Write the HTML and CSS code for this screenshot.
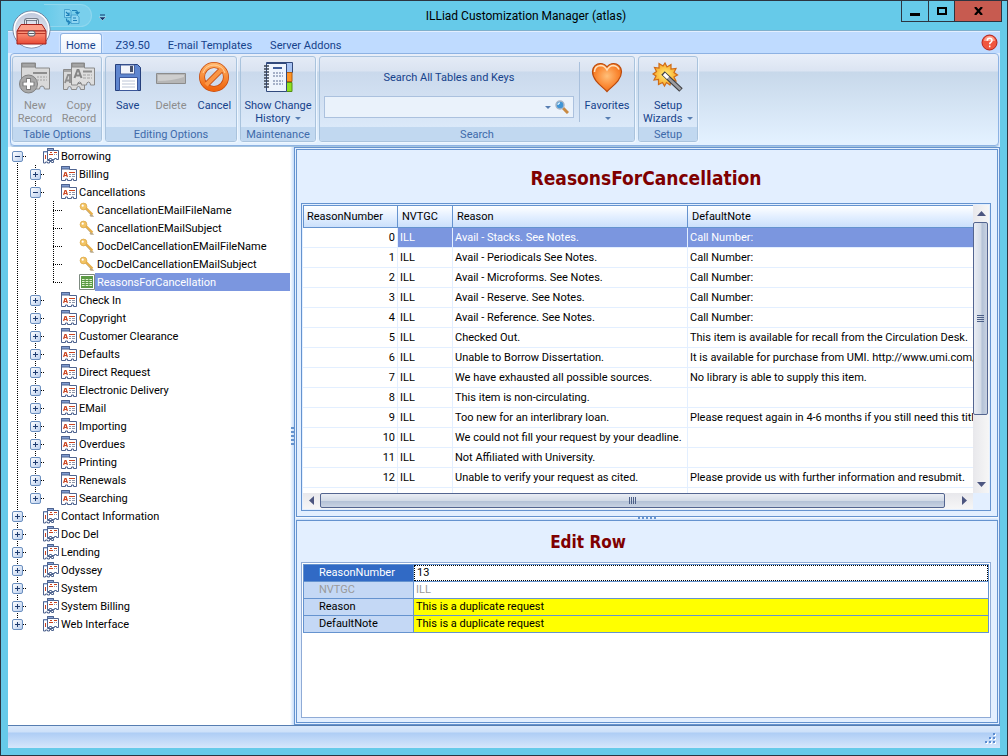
FILE: index.html
```
<!DOCTYPE html>
<html lang="en">
<head>
<meta charset="utf-8">
<title>ILLiad Customization Manager (atlas)</title>
<link rel="stylesheet" href="styles.css">
</head>
<body>
<svg class="defs" aria-hidden="true">
  <defs>
    <linearGradient id="orange" x1="0" y1="0" x2="0" y2="1"><stop offset="0" stop-color="#ffb163"/><stop offset="1" stop-color="#f0660f"/></linearGradient>
    <radialGradient id="orb" cx=".5" cy=".75" r=".75"><stop offset="0" stop-color="#ffffff"/><stop offset=".5" stop-color="#e3e7f1"/><stop offset="1" stop-color="#b9c3d8"/></radialGradient>
    <linearGradient id="red" x1="0" y1="0" x2="0" y2="1"><stop offset="0" stop-color="#ff9a80"/><stop offset="1" stop-color="#e84a35"/></linearGradient>
    <radialGradient id="gold" cx=".5" cy=".5" r=".5"><stop offset="0" stop-color="#fff27a"/><stop offset="1" stop-color="#f9a526"/></radialGradient>
    <radialGradient id="heart" cx=".5" cy=".45" r=".6"><stop offset="0" stop-color="#ffc07a"/><stop offset=".6" stop-color="#fb8a35"/><stop offset="1" stop-color="#ee6a12"/></radialGradient>
    <symbol id="i-card" viewBox="0 0 16 16">
      <path d="M.5.500h8v3h7v11h-3v-1.500h-2v1.500h-4v-1.500h-2v1.500h-4z" fill="#fff" stroke="#4d628e"/>
      <path d="M.5.500h8v2.500h-8z" fill="#7f9bd0" stroke="#4d628e"/>
      <path d="M2.600 11l1.400-4.500h1l1.400 4.500M3.200 9.500h2.600" fill="none" stroke="#cb4420" stroke-width="1.200"/>
      <path d="M8 6.500h6" stroke="#cb4420"/><path d="M8 8.500h2M11 8.500h3M8 10.500h2M11 10.500h3" stroke="#8d96ab"/>
    </symbol>
    <symbol id="i-cards" viewBox="0 0 16 16">
      <path d="M.5 3.500h4v9h6v2h-2v-1h-2v1.500h-2v-1h-2v1h-2z" fill="#fff" stroke="#4d628e"/>
      <path d="M1 4h3" stroke="#7f9bd0"/><path d="M2.500 7v4" stroke="#cb4420"/>
      <path d="M4.500.5h6v2h5v9h-2v-1h-2v1h-3v-1h-2v1h-2z" fill="#fff" stroke="#4d628e"/>
      <path d="M4.500.5h6v2h-6z" fill="#8aa5d8" stroke="#4d628e"/>
      <path d="M7 4.500h2M6 6.500h4" stroke="#cb4420" fill="none"/>
      <path d="M11 4.500h3" stroke="#cb4420"/><path d="M11 6.500h1M13 6.500h1" stroke="#8d96ab"/>
    </symbol>
    <symbol id="i-key" viewBox="0 0 16 16">
      <path d="M6 6l7.500 8h-1.500l-1-1" stroke="#b9a98a" stroke-width="1.500" fill="none"/>
      <path d="M6 5l7.500 7.500" stroke="#e8b04a" stroke-width="2.200"/>
      <circle cx="4.500" cy="4.500" r="3.400" fill="#f3c463" stroke="#d9a548" stroke-width=".7"/>
      <circle cx="3.700" cy="3.700" r="1.100" fill="#fff"/>
    </symbol>
    <symbol id="i-table" viewBox="0 0 16 16">
      <path d="M.5.5h15v15h-15z" fill="#fff" stroke="#7d8a80"/>
      <path d="M2 2h12v12h-12z" fill="#5c9a45"/>
      <path d="M3 5.500h2.600M6.700 5.500h2.600M10.400 5.500h2.600M3 7.500h2.600M6.700 7.500h2.600M10.400 7.500h2.600M3 9.500h2.600M6.700 9.500h2.600M10.400 9.500h2.600M3 11.500h2.600M6.700 11.500h2.600M10.400 11.500h2.600" stroke="#dff3cf"/>
    </symbol>
  </defs>
</svg>

<div class="window">
  <header class="titlebar">
    <div class="quick">
      <button class="quick-btn" aria-label="Refresh">
        <svg width="18" height="16" viewBox="0 0 18 16"><path d="M1.500.5h5l1.500 2v6h-6.500zM8 6h6l2 2v6.500h-8z" fill="#8fd6f2" stroke="#3b9bca" stroke-width=".8"/><path d="M3 3l3 3M6 3.500v3h-3M9 1.500h4q1.500 0 1.500 3M12.500 3l2 2 2-2M3.500 9.500q0 4 3.500 4M5 11.500l2 2-2 2M10 9h3M10 11.500h4" fill="none" stroke="#1c7fb8" stroke-width="1.200"/></svg>
      </button>
    </div>
    <button class="quick-more" aria-label="Customize toolbar">
      <svg width="7" height="7"><path d="M1 1h5" stroke="#15386e"/><path d="M0 3h7l-3.500 3.500z" fill="#15386e" stroke="#fff" stroke-width=".4"/></svg>
    </button>
    <h1 class="title">ILLiad Customization Manager (atlas)</h1>
    <div class="win-controls">
      <button class="win-btn min" aria-label="Minimize"><svg width="10" height="9"><path d="M0 6h10v3h-10z"/></svg></button>
      <button class="win-btn max" aria-label="Maximize"><svg width="10" height="8"><path d="M1 1h8v6h-8z" fill="none" stroke="#000" stroke-width="2"/></svg></button>
      <button class="win-btn close" aria-label="Close"><svg width="9" height="8"><path d="M1 0l7 8M8 0l-7 8" stroke="#000" stroke-width="2.200"/></svg></button>
    </div>
    <button class="orb" aria-label="Application menu">
      <svg width="39" height="39" viewBox="0 0 39 39">
        <circle cx="19.500" cy="19.500" r="18.500" fill="url(#orb)" stroke="#6f7f9c"/>
        <circle cx="19.500" cy="19.500" r="17.300" fill="none" stroke="#fff" stroke-width="1.400"/>
        <path d="M13.500 16v-5.500q0-1 1-1h10q1 0 1 1v5.500" fill="none" stroke="#59616e" stroke-width="2.600"/>
        <path d="M13.500 16v-5.500q0-1 1-1h10q1 0 1 1v5.500" fill="none" stroke="#e8ebf0" stroke-width="1"/>
        <path d="M9 14.500h21l4 6.500h-29z" fill="#fca08a" stroke="#a01f1a"/>
        <path d="M5 21h29v13h-29z" fill="url(#red)" stroke="#a01f1a"/>
        <path d="M5.500 23.500h28" stroke="#b93527"/>
        <rect x="16" y="21" width="7" height="5" rx="2" fill="#f4f4f4" stroke="#575c66"/><path d="M16.500 23.500h6" stroke="#575c66"/>
      </svg>
    </button>
  </header>

  <div class="client">
    <nav class="tabs">
      <button class="tab active">Home</button>
      <button class="tab">Z39.50</button>
      <button class="tab">E-mail Templates</button>
      <button class="tab">Server Addons</button>
      <button class="help" aria-label="Help"><svg width="17" height="17"><circle cx="8.500" cy="8.500" r="7.500" fill="#f0563f" stroke="#b3221b"/><path d="M3 7a5.500 5 0 0 1 11 0z" fill="#ff9f8c"/><path d="M6.200 6.800q0-2.500 2.400-2.500t2.400 2.200q0 1.300-1.400 2-.9.500-.9 1.700M8.700 11.500v1.700" fill="none" stroke="#fff" stroke-width="1.500"/></svg></button>
    </nav>

    <div class="ribbon">
      <section class="group g-table">
        <div class="group-body">
          <button class="tool" disabled>
            <svg width="32" height="32" viewBox="0 0 32 32"><path d="M2.500 6v-5h14v5h14v21h-5q0-3-2.500-3t-2.500 3h-8v-3h-2v3h-8z" fill="#d9d9d9" stroke="#8a8a8a"/><path d="M3 1.500h13v3.500h-13z" fill="#a5a5a5" stroke="#8a8a8a"/><path d="M14 11h14" stroke="#8e8e8e" stroke-width="2"/><path d="M18 15h10M18 18h10" stroke="#a2a2a2" stroke-dasharray="2 1"/><circle cx="9.500" cy="22" r="9" fill="#a8a8a8" stroke="#808080"/><path d="M9.500 16v12M3.500 22h12" stroke="#777" stroke-width="4.600"/><path d="M9.500 17v10M4.500 22h10" stroke="#fff" stroke-width="3"/></svg>
            <span>New<br>Record</span>
          </button>
          <button class="tool" disabled>
            <svg width="32" height="32" viewBox="0 0 32 32"><path d="M.5 7.500h10v14h11v6h-4q0-3-2-3t-2 3h-5q0-3-2-3t-2 3h-4z" fill="#d9d9d9" stroke="#8a8a8a"/><path d="M1 8h8v2h-8z" fill="#a5a5a5"/><path d="M2 21l3-8h2v8M3 18.500h4" fill="none" stroke="#8e8e8e" stroke-width="1.800"/><path d="M8.500 6v-5h13v5h10v17h-4q0-3-2-3t-2 3h-5q0-3-2-3t-2 3h-6z" fill="#dedede" stroke="#8a8a8a"/><path d="M9 1.500h12v3.500h-12z" fill="#a5a5a5" stroke="#8a8a8a"/><path d="M11.500 16l3-8h1l3 8M12.500 13.500h5" fill="none" stroke="#858585" stroke-width="2"/><path d="M20 9.500h9" stroke="#8e8e8e" stroke-width="2"/><path d="M20 13h9M20 16h9" stroke="#a2a2a2" stroke-dasharray="3 1"/></svg>
            <span>Copy<br>Record</span>
          </button>
        </div>
        <h2>Table Options</h2>
      </section>
      <section class="group g-edit">
        <div class="group-body">
          <button class="tool">
            <svg width="32" height="32" viewBox="0 0 32 32"><path d="M3.500 2.500h22l3 3v23h-25z" fill="#5f86cf" stroke="#253f7c"/><path d="M8.500 3h14v9h-14z" fill="#f2f4fa" stroke="#46609c"/><path d="M18 4h3v6h-3z" fill="#46506a"/><path d="M7.500 15.500h18v13h-18z" fill="#fff" stroke="#3b5699"/><path d="M10 19h13M10 22h13M10 25h13" stroke="#bcc5d6"/></svg>
            <span>Save</span>
          </button>
          <button class="tool" disabled>
            <svg width="32" height="32" viewBox="0 0 32 32"><path d="M1.500 11.500h29v10h-29z" fill="#b6b6b6" stroke="#8c8c8c"/><path d="M3 13h26v2q-12 4-26 4z" fill="#cecece"/></svg>
            <span>Delete</span>
          </button>
          <button class="tool">
            <svg width="32" height="32" viewBox="0 0 32 32"><circle cx="16" cy="15" r="12" fill="none" stroke="#c74d10" stroke-width="6"/><path d="M8 23l16-16" stroke="#c74d10" stroke-width="6"/><circle cx="16" cy="15" r="12" fill="none" stroke="url(#orange)" stroke-width="4.400"/><path d="M8 23l16-16" stroke="#fa9545" stroke-width="4"/><path d="M5 11q3-8 11-8t11 8" fill="none" stroke="#ffd0a0" stroke-width="1"/></svg>
            <span>Cancel</span>
          </button>
        </div>
        <h2>Editing Options</h2>
      </section>
      <section class="group g-history">
        <div class="group-body">
          <button class="tool">
            <svg width="32" height="32" viewBox="0 0 32 32"><path d="M4.500.5h26v10h-26z" fill="#a8c3f2" stroke="#31497c"/><path d="M24.500 10.500h5.500v9h-5.500z" fill="#ff9324" stroke="#b35d0c"/><path d="M24.500 20.500h5.500v9h-5.500z" fill="#8fe01e" stroke="#548f14"/><path d="M4.500 1.500h20v28h-20z" fill="#eef4fd" stroke="#31497c"/><path d="M11 6h9" stroke="#3c5a99" stroke-width="2"/><path d="M11 11h10M11 14h10M11 19h10M11 22h10" stroke="#5f6f94" stroke-dasharray="2 1"/><path d="M2 4h5M2 7h5M2 10h5M2 13h5M2 16h5M2 19h5M2 22h5M2 25h5" stroke="#3b4351" stroke-width="1.500"/></svg>
            <span>Show Change<br>History <i class="caret"></i></span>
          </button>
        </div>
        <h2>Maintenance</h2>
      </section>
      <section class="group g-search">
        <div class="group-body">
          <div class="search">
            <label for="search">Search All Tables and Keys</label>
            <div class="search-box">
              <input id="search" type="text">
              <button class="mini" aria-label="Search history"><i class="caret"></i></button>
              <button class="mini" aria-label="Search"><svg width="14" height="14"><path d="M8 8l5 5" stroke="#c98a42" stroke-width="3"/><circle cx="5" cy="5" r="4" fill="#3f95d6" stroke="#a7b4c5" stroke-width="1.500"/><path d="M3 5q0-2 2-2" fill="none" stroke="#d5efff" stroke-width="1.300"/></svg></button>
            </div>
          </div>
          <button class="tool favorites">
            <svg width="32" height="32" viewBox="0 0 32 32"><path d="M16 29.500C12 25 1.500 19 1.500 9.500c0-5 4-8 8-8 3 0 5 1.500 6.500 3.500 1.500-2 3.500-3.500 6.500-3.500 4 0 8 3 8 8 0 9.500-10.500 15.500-14.500 20z" fill="url(#heart)" stroke="#b94a0e" stroke-width="1.200"/><path d="M3.500 10q0-6 6-6.500 4 0 6.500 4.500 2.500-4.500 6.500-4.500 4 .5 5.500 4" fill="none" stroke="#ffe1bd" stroke-width="1.500"/></svg>
            <span>Favorites<br><i class="caret"></i></span>
          </button>
        </div>
        <h2>Search</h2>
      </section>
      <section class="group g-setup">
        <div class="group-body">
          <button class="tool">
            <svg width="32" height="32" viewBox="0 0 32 32"><path d="M13 1l2 4 4-2.500 0 4.500 5-.5-2 4 3.500 2.500-3.500 2 2 4-5-.5-1 4.500-3.500-2.500-2 3.500-2-3.500-4 2 0-5-4.500.5 2-4-3-2 3.500-2.500-2-4 4.500.5 0-4.500 4 2.500z" fill="url(#gold)" stroke="#cf6a16" stroke-width="1.200"/><path d="M11 11l18 17" stroke="#3f3f42" stroke-width="5"/><path d="M12 12l16.500 15.500" stroke="#9c9ca0" stroke-width="2.600"/><path d="M12 12l4 3.800" stroke="#fff" stroke-width="3.200"/></svg>
            <span>Setup<br>Wizards <i class="caret"></i></span>
          </button>
        </div>
        <h2>Setup</h2>
      </section>
    </div>

    <main class="workspace">
      <aside class="tree">
        <div class="row"><span class="g below"><button class="tg minus" aria-label="Collapse"></button></span><svg class="ic"><use href="#i-cards"/></svg><span class="name">Borrowing</span></div>
        <div class="row"><span class="g line"></span><span class="g line"><button class="tg" aria-label="Expand"></button></span><svg class="ic"><use href="#i-card"/></svg><span class="name">Billing</span></div>
        <div class="row"><span class="g line"></span><span class="g line"><button class="tg minus" aria-label="Collapse"></button></span><svg class="ic"><use href="#i-card"/></svg><span class="name">Cancellations</span></div>
        <div class="row"><span class="g line"></span><span class="g line"></span><span class="g line leaf"></span><svg class="ic"><use href="#i-key"/></svg><span class="name">CancellationEMailFileName</span></div>
        <div class="row"><span class="g line"></span><span class="g line"></span><span class="g line leaf"></span><svg class="ic"><use href="#i-key"/></svg><span class="name">CancellationEMailSubject</span></div>
        <div class="row"><span class="g line"></span><span class="g line"></span><span class="g line leaf"></span><svg class="ic"><use href="#i-key"/></svg><span class="name">DocDelCancellationEMailFileName</span></div>
        <div class="row"><span class="g line"></span><span class="g line"></span><span class="g line leaf"></span><svg class="ic"><use href="#i-key"/></svg><span class="name">DocDelCancellationEMailSubject</span></div>
        <div class="row selected"><span class="g line"></span><span class="g line"></span><span class="g above leaf"></span><svg class="ic"><use href="#i-table"/></svg><span class="name">ReasonsForCancellation</span></div>
        <div class="row"><span class="g line"></span><span class="g line"><button class="tg" aria-label="Expand"></button></span><svg class="ic"><use href="#i-card"/></svg><span class="name">Check In</span></div>
        <div class="row"><span class="g line"></span><span class="g line"><button class="tg" aria-label="Expand"></button></span><svg class="ic"><use href="#i-card"/></svg><span class="name">Copyright</span></div>
        <div class="row"><span class="g line"></span><span class="g line"><button class="tg" aria-label="Expand"></button></span><svg class="ic"><use href="#i-card"/></svg><span class="name">Customer Clearance</span></div>
        <div class="row"><span class="g line"></span><span class="g line"><button class="tg" aria-label="Expand"></button></span><svg class="ic"><use href="#i-card"/></svg><span class="name">Defaults</span></div>
        <div class="row"><span class="g line"></span><span class="g line"><button class="tg" aria-label="Expand"></button></span><svg class="ic"><use href="#i-card"/></svg><span class="name">Direct Request</span></div>
        <div class="row"><span class="g line"></span><span class="g line"><button class="tg" aria-label="Expand"></button></span><svg class="ic"><use href="#i-card"/></svg><span class="name">Electronic Delivery</span></div>
        <div class="row"><span class="g line"></span><span class="g line"><button class="tg" aria-label="Expand"></button></span><svg class="ic"><use href="#i-card"/></svg><span class="name">EMail</span></div>
        <div class="row"><span class="g line"></span><span class="g line"><button class="tg" aria-label="Expand"></button></span><svg class="ic"><use href="#i-card"/></svg><span class="name">Importing</span></div>
        <div class="row"><span class="g line"></span><span class="g line"><button class="tg" aria-label="Expand"></button></span><svg class="ic"><use href="#i-card"/></svg><span class="name">Overdues</span></div>
        <div class="row"><span class="g line"></span><span class="g line"><button class="tg" aria-label="Expand"></button></span><svg class="ic"><use href="#i-card"/></svg><span class="name">Printing</span></div>
        <div class="row"><span class="g line"></span><span class="g line"><button class="tg" aria-label="Expand"></button></span><svg class="ic"><use href="#i-card"/></svg><span class="name">Renewals</span></div>
        <div class="row"><span class="g line"></span><span class="g above"><button class="tg" aria-label="Expand"></button></span><svg class="ic"><use href="#i-card"/></svg><span class="name">Searching</span></div>
        <div class="row"><span class="g line"><button class="tg" aria-label="Expand"></button></span><svg class="ic"><use href="#i-cards"/></svg><span class="name">Contact Information</span></div>
        <div class="row"><span class="g line"><button class="tg" aria-label="Expand"></button></span><svg class="ic"><use href="#i-cards"/></svg><span class="name">Doc Del</span></div>
        <div class="row"><span class="g line"><button class="tg" aria-label="Expand"></button></span><svg class="ic"><use href="#i-cards"/></svg><span class="name">Lending</span></div>
        <div class="row"><span class="g line"><button class="tg" aria-label="Expand"></button></span><svg class="ic"><use href="#i-cards"/></svg><span class="name">Odyssey</span></div>
        <div class="row"><span class="g line"><button class="tg" aria-label="Expand"></button></span><svg class="ic"><use href="#i-cards"/></svg><span class="name">System</span></div>
        <div class="row"><span class="g line"><button class="tg" aria-label="Expand"></button></span><svg class="ic"><use href="#i-cards"/></svg><span class="name">System Billing</span></div>
        <div class="row"><span class="g above"><button class="tg" aria-label="Expand"></button></span><svg class="ic"><use href="#i-cards"/></svg><span class="name">Web Interface</span></div>
      </aside>
      <div class="splitter-v"><i class="grip"></i></div>

      <div class="content">
        <section class="panel panel-top">
          <h2 class="heading">ReasonsForCancellation</h2>
          <div class="grid">
            <div class="viewport">
              <table class="reasons">
                <colgroup><col class="c-num"><col class="c-code"><col class="c-reason"><col></colgroup>
                <thead><tr><th>ReasonNumber</th><th>NVTGC</th><th>Reason</th><th>DefaultNote</th></tr></thead>
                <tbody>
                  <tr class="current"><td>0</td><td>ILL</td><td>Avail - Stacks. See Notes.</td><td>Call Number:</td></tr>
                  <tr><td>1</td><td>ILL</td><td>Avail - Periodicals See Notes.</td><td>Call Number:</td></tr>
                  <tr><td>2</td><td>ILL</td><td>Avail - Microforms. See Notes.</td><td>Call Number:</td></tr>
                  <tr><td>3</td><td>ILL</td><td>Avail - Reserve. See Notes.</td><td>Call Number:</td></tr>
                  <tr><td>4</td><td>ILL</td><td>Avail - Reference. See Notes.</td><td>Call Number:</td></tr>
                  <tr><td>5</td><td>ILL</td><td>Checked Out.</td><td>This item is available for recall from the Circulation Desk.</td></tr>
                  <tr><td>6</td><td>ILL</td><td>Unable to Borrow Dissertation.</td><td>It is available for purchase from UMI. http://www.umi.com/</td></tr>
                  <tr><td>7</td><td>ILL</td><td>We have exhausted all possible sources.</td><td>No library is able to supply this item.</td></tr>
                  <tr><td>8</td><td>ILL</td><td>This item is non-circulating.</td><td></td></tr>
                  <tr><td>9</td><td>ILL</td><td>Too new for an interlibrary loan.</td><td>Please request again in 4-6 months if you still need this title</td></tr>
                  <tr><td>10</td><td>ILL</td><td>We could not fill your request by your deadline.</td><td></td></tr>
                  <tr><td>11</td><td>ILL</td><td>Not Affiliated with University.</td><td></td></tr>
                  <tr><td>12</td><td>ILL</td><td>Unable to verify your request as cited.</td><td>Please provide us with further information and resubmit.</td></tr>
                  <tr><td></td><td></td><td></td><td></td></tr>
                </tbody>
              </table>
            </div>
            <div class="vscroll">
              <button class="arrow" aria-label="Scroll up"><svg width="9" height="5"><path d="M0 5l4.500-5 4.500 5z"/></svg></button>
              <div class="thumb"></div><div class="rest"></div>
              <button class="arrow" aria-label="Scroll down"><svg width="9" height="5"><path d="M0 0l4.500 5 4.500-5z"/></svg></button>
            </div>
            <div class="hscroll">
              <button class="arrow" aria-label="Scroll left"><svg width="5" height="9"><path d="M5 0l-5 4.500 5 4.500z"/></svg></button>
              <div class="thumb"></div><div class="rest"></div>
              <button class="arrow" aria-label="Scroll right"><svg width="5" height="9"><path d="M0 0l5 4.500-5 4.500z"/></svg></button>
            </div>
            <div class="corner"></div>
          </div>
        </section>
        <div class="splitter-h"><i class="grip"></i></div>
        <section class="panel panel-bottom">
          <h2 class="heading edit-heading">Edit Row</h2>
          <div class="editor">
            <table class="fields">
              <tr class="current"><th><label for="f1">ReasonNumber</label></th><td><input id="f1" type="text" value="13"></td></tr>
              <tr class="off"><th><label for="f2">NVTGC</label></th><td><input id="f2" type="text" value="ILL" disabled></td></tr>
              <tr class="changed"><th><label for="f3">Reason</label></th><td><input id="f3" type="text" value="This is a duplicate request"></td></tr>
              <tr class="changed"><th><label for="f4">DefaultNote</label></th><td><input id="f4" type="text" value="This is a duplicate request"></td></tr>
            </table>
          </div>
        </section>
      </div>
    </main>

    <footer class="status">
      <svg width="12" height="12"><path d="M10 2h2v2h-2zM6 6h2v2h-2zM10 6h2v2h-2zM2 10h2v2h-2zM6 10h2v2h-2zM10 10h2v2h-2z" fill="#fff"/><path d="M9 1h2v2h-2zM5 5h2v2h-2zM9 5h2v2h-2zM1 9h2v2h-2zM5 9h2v2h-2zM9 9h2v2h-2z" fill="#5b8bd0"/></svg>
    </footer>
  </div>
</div>
</body>
</html>
```
FILE: styles.css
```
* { box-sizing: border-box; }
html, body { height: 100%; margin: 0; }
body, button, input {
  font-family: Roboto, "DejaVu Sans Condensed", sans-serif;
  font-size: 11px;
  line-height: 13px;
  color: #000;
}
button { border: 0; padding: 0; background: none; }
h1, h2 { margin: 0; font-size: 11px; font-weight: normal; }
.defs { position: absolute; width: 0; height: 0; }

.window {
  height: 100vh;
  display: flex;
  flex-direction: column;
  border: 1px solid #2c3440;
  background: #66cae9;
  padding: 0 7px 7px;
}

/* Title bar */
.titlebar { position: relative; display: flex; height: 29px; flex: none; }
.quick {
  width: 48px; height: 23px; margin: 3px 0 0 36px; padding: 4px 0 0 19px;
  border: 1px solid #8fd7ee; border-left: 0; border-radius: 0 12px 12px 0;
  background: linear-gradient(90deg, #66cae9, #79cfec 35%);
}
.quick-btn { display: block; height: 16px; }
.quick-more { width: 20px; height: 29px; padding-top: 3px; }
.title {
  position: absolute; inset: 0 0 0 44px;
  font-size: 12px; line-height: 30px;
  text-align: center;
  pointer-events: none;
}
.win-controls { display: flex; margin-left: auto; height: 21px; margin-right: -2px; border: 1px solid #2c3440; border-top: 0; }
.win-btn { display: flex; align-items: center; justify-content: center; width: 27px; border-right: 1px solid #2c3440; }
.win-btn.max { width: 26px; }
.win-btn.close { width: 46px; border: 0; background: #c75b50; }
.orb { position: absolute; left: 4px; top: 9px; width: 39px; height: 39px; z-index: 2; }

.client { flex: 1; min-height: 0; display: flex; flex-direction: column; background: #e3efff; border-top: 1px solid #7fb0cc; }

/* Ribbon tabs */
.tabs { display: flex; align-items: flex-end; height: 22px; flex: none; padding: 0 2px 0 52px; background: #bfdbff; border-top: 1px solid #e3efff; }
.tab { height: 20px; padding: 4px 6px 0; margin-right: 6px; color: #15428b; }
.tab.active { padding: 3px 5px 0; border: 1px solid #8db2e3; border-bottom: 0; border-radius: 3px 3px 0 0; background: linear-gradient(#fff, #ebf3fe); box-shadow: 0 0 2px #fff; }
.tab.active + .tab { margin-left: 2px; }
.help { margin-left: auto; height: 19px; }

/* Ribbon */
.ribbon {
  display: flex; gap: 3px; height: 93px; flex: none; margin: 0 1px 1px 2px; padding: 2px 2px 0 1px;
  border: 1px solid #8db2e3; border-radius: 4px;
  background: linear-gradient(#e9eff9 0, #dbe4f2 17px, #c7d8ea 18px, #e3f1ff 88px);
  box-shadow: 0 1px 1px #9ebfdb;
}
.group {
  display: flex; flex-direction: column; height: 86px;
  border: 1px solid #a9c3dd; border-radius: 3px;
  background: linear-gradient(#e4ebf6 0, #dae3f1 14px, #cad9ec 15px, #dbe9f9 70px);
  box-shadow: 1px 1px 0 #eef6ff;
}
.group h2 { height: 14px; line-height: 15px; text-align: center; color: #3e6aaa; background: #c1d8f0; border-radius: 0 0 2px 2px; }
.group-body { flex: 1; display: flex; padding-top: 5px; }
.g-table { width: 90px; }
.g-edit { width: 132px; }
.g-history { width: 76px; }
.g-search { width: 316px; }
.g-setup { width: 60px; }
.tool { flex: 1; display: flex; flex-direction: column; align-items: center; gap: 5px; color: #15428b; white-space: nowrap; }
.tool:disabled { color: #8d8d8d; }
.caret { display: inline-block; border: 3px solid transparent; border-top-color: #567db1; border-bottom: 0; vertical-align: 2px; margin-left: 2px; }
.search { flex: 1; display: flex; flex-direction: column; padding: 9px 5px 0 4px; gap: 12px; border-right: 1px solid #a9c0dc; height: 60px; }
.search label { text-align: center; color: #15428b; }
.search-box { display: flex; align-items: center; height: 22px; flex: none; border: 1px solid #abc1de; background: #eaf2fb; }
.search-box input { flex: 1; min-width: 0; height: 20px; border: 0; background: none; outline: 0; }
.mini { height: 20px; margin-right: 4px; display: flex; align-items: center; }
.tool.favorites { flex: 0 0 54px; }

/* Workspace */
.workspace { flex: 1; min-height: 0; display: flex; }
.tree { flex: 0 0 282px; background: #fff; overflow: hidden; }
.row { display: flex; align-items: center; height: 18px; }
.g { position: relative; flex: none; width: 18px; height: 18px; background: repeating-linear-gradient(#000 0 1px, transparent 1px 2px) 9px 0 / 1px 18px no-repeat; }
.g.above { background-size: 1px 9px; }
.g.below { background-position: 9px 10px; background-size: 1px 8px; }
.g.leaf::after { content: ""; position: absolute; left: 9px; right: 0; top: 9px; height: 1px; background: repeating-linear-gradient(90deg, #000 0 1px, transparent 1px 2px); }
.tg {
  position: absolute; left: 4px; top: 4px; width: 11px; height: 11px;
  border: 1px solid #6b8fbf; border-radius: 2px;
  background: linear-gradient(#1f3c70, #1f3c70) 2px 4px / 5px 1px no-repeat, linear-gradient(#1f3c70, #1f3c70) 4px 2px / 1px 5px no-repeat, linear-gradient(135deg, #fff, #bcd0ee);
}
.tg.minus { background: linear-gradient(#1f3c70, #1f3c70) 2px 4px / 5px 1px no-repeat, linear-gradient(135deg, #fff, #bcd0ee); }
.tg::after { content: ""; position: absolute; left: 10px; top: 4px; width: 3px; height: 1px; background: repeating-linear-gradient(90deg, #000 0 1px, transparent 1px 2px); }
.ic { width: 16px; height: 16px; margin-left: 17px; flex: none; }
.name { flex: 1; height: 18px; padding: 1px 0 0 2px; line-height: 18px; white-space: nowrap; }
.selected .name { background: #7b96df; color: #fff; }
.splitter-v { flex: 0 0 4px; display: flex; align-items: center; justify-content: center; background: linear-gradient(90deg, #fff, #c5dcfa); }
.splitter-v .grip { width: 3px; height: 18px; background: repeating-linear-gradient(#6593cf 0 2px, transparent 2px 4px); }

.content { flex: 1; min-width: 0; display: flex; flex-direction: column; border: 1px solid #6593cf; padding: 1px; background: #e3efff; }
.panel { display: flex; flex-direction: column; min-height: 0; border: 1px solid #6593cf; padding: 0 6px 4px 4px; background: #e3efff; }
.panel-top { flex: 369 1 0; padding-bottom: 5px; }
.panel-bottom { flex: 202 1 0; }
.splitter-h { flex: none; height: 3px; display: flex; justify-content: center; background: linear-gradient(#fff, #c5dcfa); }
.splitter-h .grip { width: 18px; height: 2px; background: repeating-linear-gradient(90deg, #6593cf 0 2px, transparent 2px 4px); }
.heading { flex: none; height: 53px; line-height: 57px; font-family: "DejaVu Sans Condensed", sans-serif; font-size: 19px; font-weight: bold; text-align: center; color: #7f0000; }
.edit-heading { height: 41px; line-height: 43px; font-size: 17px; padding-right: 116px; }

.grid {
  flex: 1; min-height: 0; display: grid;
  grid-template-columns: minmax(0, 1fr) 16px; grid-template-rows: minmax(0, 1fr) 16px;
  border: 1px solid #6593cf; padding: 1px; background: #e3efff;
}
.viewport { overflow: hidden; background: #fff; }
table { border-collapse: separate; border-spacing: 0; table-layout: fixed; width: 100%; }
.c-num { width: 95px; }
.c-code { width: 55px; }
.c-reason { width: 235px; }
.reasons th {
  height: 23px; padding: 0 0 0 4px; text-align: left; font-weight: normal;
  border: solid #6593cf; border-width: 1px 1px 1px 0;
  background: linear-gradient(#fff, #e3efff 50%, #cbe0fb);
}
.reasons th:first-child { border-left-width: 1px; padding-left: 3px; }
.reasons th:last-child { border-right: 0; }
.reasons td { height: 20px; padding: 0 0 0 2px; white-space: nowrap; overflow: hidden; border-bottom: 1px solid #e3efff; border-right: 1px solid #e3efff; }
.reasons td:first-child { text-align: right; padding-right: 2px; }
.reasons td:last-child { border-right: 0; }
.reasons .current td:not(:first-child) { background: #7b96df; color: #fff; }

.vscroll, .hscroll { display: flex; background: linear-gradient(90deg, #e8e8ec, #f6f6f6); }
.vscroll { flex-direction: column; }
.hscroll { background: linear-gradient(#e8e8ec, #f6f6f6); }
.arrow { flex: 0 0 17px; display: flex; align-items: center; justify-content: center; }
.arrow svg { fill: #4c5680; }
.thumb { display: flex; border: 1px solid #536590; border-radius: 2px; }
.vscroll .thumb { flex: 193 1 0; margin-right: 1px; background:
  repeating-linear-gradient(#4c5f87 0 1px, transparent 1px 2px) center / 7px 7px no-repeat,
  linear-gradient(90deg, #e9edf4, #d3dbe7 55%, #b3c1d6 60%, #c9d3e3); }
.vscroll .rest { flex: 61 1 0; }
.hscroll .thumb { flex: 626 1 0; margin-bottom: 1px; background:
  repeating-linear-gradient(90deg, #4c5f87 0 1px, transparent 1px 2px) center / 7px 7px no-repeat,
  linear-gradient(#e9edf4, #d3dbe7 50%, #b3c1d6 55%, #c9d3e3); }
.hscroll .rest { flex: 11 1 0; }

.editor { flex: 1; min-height: 0; border: 1px solid #8fabd6; padding: 1px; background: #fff; }
.fields { border: solid #6593cf; border-width: 1px 1px 0; }
.fields th { width: 110px; height: 17px; padding: 0 0 0 15px; text-align: left; font-weight: normal; background: #c4d8f5; border-right: 1px solid #6593cf; border-bottom: 1px solid #6593cf; }
.fields td { height: 17px; padding: 0; border-bottom: 1px solid #6593cf; }
.fields input { display: block; width: 100%; height: 16px; border: 0; padding: 0 2px; background: #fff; outline: 0; }
.fields .current th { background: #316ac5; color: #fff; }
.fields .current input { border: 1px dotted #000; }
.fields .off th, .fields .off input { color: #9a9a9a; }
.fields .changed input { background: #ff0; }

/* Status bar */
.status {
  flex: none; height: 23px; display: flex; align-items: flex-end; justify-content: flex-end; padding: 0 4px 4px;
  border-top: 1px solid #567db1;
  background: linear-gradient(#d9e8fb 0, #cde0f9 6px, #aecdf5 7px, #d6e6fb);
}
```
